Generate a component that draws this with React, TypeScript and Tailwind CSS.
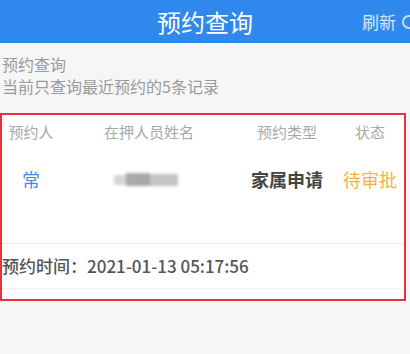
import React from 'react';

const font = { fontFamily: '"Noto Sans CJK SC", "Noto Sans", sans-serif' };

function BlurredName() {
  return (
    <div className="flex h-[14px] items-center blur-[1.5px]">
      <span className="h-[10px] w-[12px] bg-[#d6d6d6]" />
      <span className="h-[13px] w-[24px] bg-[#a9a9a9]" />
      <span className="h-[12px] w-[28px] bg-[#c4c4c4]" />
    </div>
  );
}

export default function App() {
  return (
    <div className="h-[354px] w-[410px] overflow-hidden bg-[#f6f6f6]" style={font}>
      <header className="relative flex h-[43px] items-center justify-center bg-[#2f88ec]">
        <h1 className="text-[24px] leading-none text-white">预约查询</h1>
        <div className="absolute left-[362px] top-0 flex h-full items-center gap-[6px] whitespace-nowrap text-[17px] text-white/80">
          <span>刷新</span>
          <span className="h-[14px] w-[14px] shrink-0 rounded-full border-2 border-white/70" />
        </div>
      </header>

      <div className="px-[2px] pt-[10px] text-[16px] leading-[22px] text-[#9a9a9a]">
        <p>预约查询</p>
        <p>当前只查询最近预约的5条记录</p>
      </div>

      <section className="mt-[16px] w-[406px] border-2 border-[#e6323a] bg-white">
        <div className="grid h-[34px] grid-cols-[58px_178px_98px_68px] items-center text-center text-[15px] text-[#a8a8a8]">
          <span>预约人</span>
          <span>在押人员姓名</span>
          <span>预约类型</span>
          <span>状态</span>
        </div>
        <div className="h-[94px] pt-[17px]">
          <div className="grid h-[24px] grid-cols-[58px_178px_98px_68px] items-center text-center text-[18px]">
            <span className="text-[#3d8fe6]">常</span>
            <span className="flex justify-center pr-[6px]">
              <BlurredName />
            </span>
            <span className="font-semibold text-[#444]">家属申请</span>
            <span className="text-[#f2b441]">待审批</span>
          </div>
        </div>
        <div className="flex h-[45px] items-center border-t border-[#efefef] text-[17px] font-medium text-[#555]">
          预约时间：2021-01-13 05:17:56
        </div>
        <div className="h-[11px] border-t border-[#f1f1f1] bg-[#fcfcfc]" />
      </section>
    </div>
  );
}
